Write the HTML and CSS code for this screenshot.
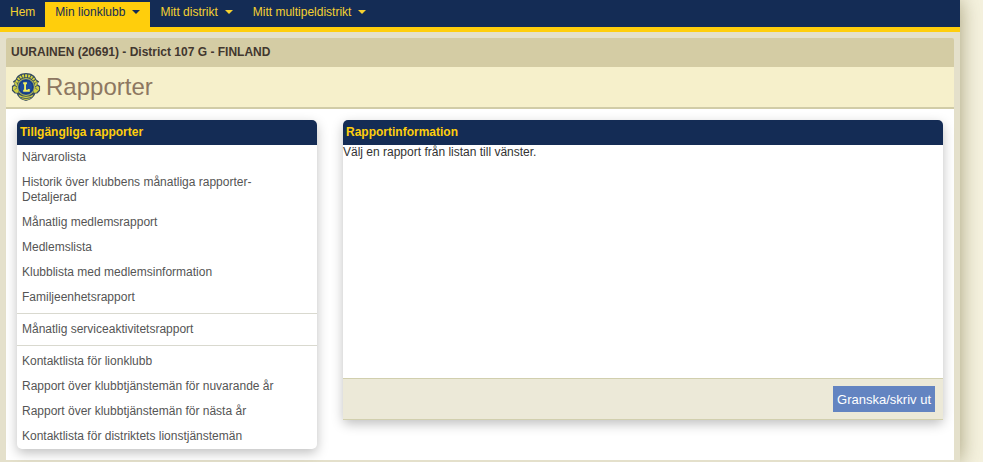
FILE: index.html
```html
<!DOCTYPE html>
<html lang="sv">

<head>
    <meta charset="UTF-8">
    <meta name="viewport" content="width=device-width, initial-scale=1.0">
    <title>Rapporter</title>
    <link rel="stylesheet" href="styles.css">
</head>

<body>
    <div class="page">
        <nav class="main-nav">
            <a href="#">Hem</a>
            <a href="#" class="active">Min lionklubb <span class="caret"></span></a>
            <a href="#">Mitt distrikt <span class="caret"></span></a>
            <a href="#">Mitt multipeldistrikt <span class="caret"></span></a>
        </nav>
        <main class="content">
            <div class="club-bar">UURAINEN (20691) - District 107 G - FINLAND</div>
            <div class="title-bar">
                <svg class="logo" viewBox="0 0 32 32" aria-hidden="true">
                    <path fill="#344a62" d="M16 1C10 1 6 4 5 8L2 10 4 13 1 15 1 20 4 23 6 23C8 28 12 30 16 31C20 30 24 28 26 23L28 23 31 20 31 15 28 13 30 10 27 8C26 4 22 1 16 1Z"/>
                    <path fill="none" stroke="#d6d640" stroke-width="3" stroke-dasharray="2 1" d="M6 11Q9 4 16 4T26 11"/>
                    <path fill="#cfcf42" d="M6 11L3 11 5 14 2 16 2 19 5 22 8 22 7 17ZM26 11L29 11 27 14 30 16 30 19 27 22 24 22 25 17ZM8 24Q16 29 24 24Q22 29 16 30Q10 29 8 24Z"/>
                    <path fill="none" stroke="#42566a" stroke-width="1" d="M3 14l4 2-3 3M29 14l-4 2 3 3M10 27q6 3 12 0"/>
                    <circle cx="16" cy="16" r="9" fill="#1f4892" stroke="#d2d345" stroke-width="1"/>
                    <circle cx="16" cy="16" r="7" fill="#1d4c9a" stroke="#183a78" stroke-width="1"/>
                    <path fill="none" stroke="#f2ed62" stroke-width="2" d="M13 12h4M15 12v8M13 20h6v-2"/>
                </svg>
                <h1>Rapporter</h1>
            </div>
            <div class="columns">
                <section class="panel">
                    <h2>Tillgängliga rapporter</h2>
                    <ul class="report-list">
                        <li><a href="#">Närvarolista</a></li>
                        <li><a href="#">Historik över klubbens månatliga rapporter-Detaljerad</a></li>
                        <li><a href="#">Månatlig medlemsrapport</a></li>
                        <li><a href="#">Medlemslista</a></li>
                        <li><a href="#">Klubblista med medlemsinformation</a></li>
                        <li><a href="#">Familjeenhetsrapport</a></li>
                        <li class="group"><a href="#">Månatlig serviceaktivitetsrapport</a></li>
                        <li class="group"><a href="#">Kontaktlista för lionklubb</a></li>
                        <li><a href="#">Rapport över klubbtjänstemän för nuvarande år</a></li>
                        <li><a href="#">Rapport över klubbtjänstemän för nästa år</a></li>
                        <li><a href="#">Kontaktlista för distriktets lionstjänstemän</a></li>
                    </ul>
                </section>
                <section class="panel">
                    <h2>Rapportinformation</h2>
                    <p class="report-info">Välj en rapport från listan till vänster.</p>
                    <div class="panel-footer">
                        <button type="button" class="print-btn">Granska/skriv ut</button>
                    </div>
                </section>
            </div>
        </main>
    </div>
</body>

</html>
```

FILE: styles.css
```css
* {
    box-sizing: border-box;
}

body {
    font-family: Arial, "Liberation Sans", sans-serif;
    font-size: 12px;
    line-height: 15px;
    margin: 0;
    color: #333;
    background-color: #f5f2df;
}

.page {
    margin-right: 23px;
    background-color: #e4e0cb;
    box-shadow: 0 0 20px rgba(110, 100, 50, 0.6);
}

/* navigation */
.main-nav {
    display: flex;
    height: 32px;
    background-color: #142c55;
    border-bottom: 5px solid #ffce0c;
}

.main-nav a {
    display: flex;
    align-items: center;
    gap: 7px;
    height: 25px;
    margin-top: 2px;
    padding: 0 10px 5px;
    color: #f5d130;
    text-decoration: none;
}

.main-nav .active {
    background-color: #ffce0c;
    color: #142c55;
}

.caret {
    border: 4px solid transparent;
    border-top-color: currentColor;
    border-bottom: 0;
}

/* header */
.content {
    padding: 6px 6px 2px;
}

.club-bar {
    padding: 7px 5px;
    font-weight: bold;
    color: #42372f;
    background-color: #d4cca4;
    border-radius: 2px 2px 0 0;
}

.title-bar {
    display: flex;
    align-items: center;
    gap: 5px;
    height: 42px;
    padding: 0 5px;
    background-color: #f6f0cb;
    border-bottom: 2px solid #d1cca7;
}

.logo {
    width: 30px;
    height: 30px;
}

.title-bar h1 {
    margin: 0;
    font-size: 24px;
    font-weight: normal;
    line-height: 30px;
    color: #8d7761;
}

/* panels */
.columns {
    display: grid;
    grid-template-columns: 300px 1fr;
    align-items: start;
    gap: 26px;
    padding: 11px;
    background-color: #fff;
}

.panel {
    background-color: #fff;
    border-radius: 5px;
    box-shadow: 0 4px 12px rgba(0, 0, 0, 0.25);
}

.panel h2 {
    margin: 0;
    padding: 5px 3px;
    font-size: 12px;
    line-height: 15px;
    color: #ffce0c;
    background-color: #142c55;
    border-radius: 5px 5px 0 0;
}

.report-list {
    margin: 0;
    padding: 0;
    list-style: none;
}

.report-list a {
    display: block;
    padding: 5px 20px 5px 5px;
    color: #555;
    text-decoration: none;
}

.report-list .group {
    margin-top: 3px;
    padding-top: 3px;
    border-top: 1px solid #d9d9cf;
}

.report-info {
    min-height: 233px;
    margin: 0;
}

.panel-footer {
    display: flex;
    justify-content: flex-end;
    padding: 7px 8px;
    background-color: #ece9d8;
    border-top: 1px solid #d1cfae;
    border-bottom: 1px solid #d1cfae;
}

.print-btn {
    height: 26px;
    padding: 0 4px;
    border: 0;
    font-family: inherit;
    font-size: 13px;
    color: #fff;
    background-color: #6384c1;
    cursor: pointer;
}
```
